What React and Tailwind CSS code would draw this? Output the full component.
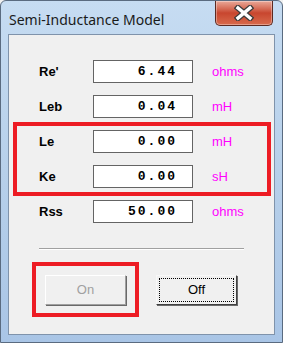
import * as React from 'react';

function Field({ label, value, unit }) {
    return (
        <div className="flex items-center h-[23px]">
            <div className="w-[54px] text-[13px] font-bold text-black leading-none">{label}</div>
            <div className="w-[100px] h-[23px] bg-white border border-[#646464] flex items-center justify-end pr-[15px]">
                <span className="font-['Liberation_Mono',monospace] font-bold text-[13px] tracking-[2px] text-black leading-none">{value}</span>
            </div>
            <div className="ml-[19px] text-[13px] text-[#ff00ff] leading-none">{unit}</div>
        </div>
    );
}

function CloseButton() {
    return (
        <div className="absolute right-[9px] top-0 w-[58px] h-[25px] rounded-b-[5px] border border-t-0 border-[#5c2a22] bg-gradient-to-b from-[#e9a898] via-[#c8462f] to-[#d86a4c] flex items-center justify-center shadow-[inset_0_0_0_1px_rgba(255,255,255,0.35)]">
            <svg width="20" height="16" viewBox="0 0 20 16">
                <path d="M4 3 L16 13 M16 3 L4 13" stroke="#3c3c3c" strokeWidth="6" strokeLinecap="square" />
                <path d="M4 3 L16 13 M16 3 L4 13" stroke="#ffffff" strokeWidth="3.4" strokeLinecap="square" />
            </svg>
        </div>
    );
}

export default function App() {
    return (
        <div className="w-[283px] h-[343px] bg-[#f0f0f0] font-['Liberation_Sans',Arial,sans-serif]">
            <div className="relative w-[283px] h-[343px] rounded-t-[6px] border border-[#5a6b80] bg-gradient-to-b from-[#c6dcf2] via-[#b7d0ea] to-[#a9c5e6] flex flex-col">
                <div className="h-[33px] flex items-center pl-[8px] pt-[3px]">
                    <span className="font-['Noto_Sans',sans-serif] text-[14px] text-[#1a1a1a]">Semi-Inductance Model</span>
                </div>
                <CloseButton />
                <div className="mx-[7px] w-[267px] h-[301px] border border-[#7f93ab] bg-[#f0f0f0] flex flex-col">
                    <div className="pt-[25px] flex flex-col">
                        <div className="pl-[30px] flex flex-col gap-[12px]">
                            <Field label="Re'" value="6.44" unit="ohms" />
                            <Field label="Leb" value="0.04" unit="mH" />
                        </div>
                        <div className="mt-[4px] ml-[4px] w-[258px] border-[4px] border-[#ed1c24] pl-[22px] py-[4px] flex flex-col gap-[12px]">
                            <Field label="Le" value="0.00" unit="mH" />
                            <Field label="Ke" value="0.00" unit="sH" />
                        </div>
                        <div className="mt-[4px] pl-[30px]">
                            <Field label="Rss" value="50.00" unit="ohms" />
                        </div>
                        <div className="mt-[25px] ml-[30px] w-[205px] border-t border-[#a0a0a0] border-b border-b-white" />
                        <div className="mt-[12px] flex items-start">
                            <div className="ml-[23px] w-[107px] h-[55px] border-[4px] border-[#ed1c24] flex items-center justify-center">
                                <div className="w-[81px] h-[30px] border border-t-white border-l-white border-r-[#a0a0a0] border-b-[#a0a0a0] shadow-[1px_1px_0_#696969] bg-[#f0f0f0] flex items-center justify-center text-[13px] text-[#a0a0a0]">
                                    On
                                </div>
                            </div>
                            <div className="ml-[17px] mt-[13px] w-[81px] h-[30px] border border-[#404040] border-t-[#f8f8f8] border-l-[#f8f8f8] shadow-[1px_1px_0_#696969] bg-[#f0f0f0] p-[2px]">
                                <div className="w-full h-full border border-dotted border-black flex items-center justify-center text-[13px] text-black">
                                    Off
                                </div>
                            </div>
                        </div>
                    </div>
                </div>
            </div>
        </div>
    );
}
